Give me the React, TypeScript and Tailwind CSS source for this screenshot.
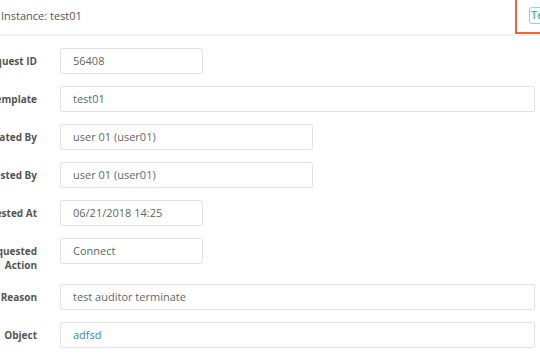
import React from 'react';

const rows = [
  { label: 'Request ID', value: '56408', w: 'w-[143px]' },
  { label: 'Template', value: 'test01', w: 'w-[475px]' },
  { label: 'Created By', value: 'user 01 (user01)', w: 'w-[253px]' },
  { label: 'Requested By', value: 'user 01 (user01)', w: 'w-[253px]' },
  { label: 'Requested At', value: '06/21/2018 14:25', w: 'w-[143px]' },
  { label: 'Requested Action', value: 'Connect', w: 'w-[143px]' },
  { label: 'Reason', value: 'test auditor terminate', w: 'w-[475px]' },
  { label: 'Object', value: 'adfsd', w: 'w-[475px]', link: true },
];

export default function App() {
  return (
    <div className="w-[540px] h-[360px] overflow-hidden bg-white font-['Open_Sans',sans-serif]">
      {/* Header */}
      <div className="flex items-start h-[36px] border-b-2 border-[#f1f1f1]">
        <div className="flex-1 pt-[8px] pl-[1px] text-[11px] text-[#555] whitespace-nowrap">
          Instance: test01
        </div>
        <div className="w-[25px] h-[34px] shrink-0 border-l-2 border-b-2 border-[#f26436] pl-[12px] pt-[7px] overflow-hidden">
          <div className="h-[17px] w-[64px] border-[1.5px] border-[#8fd9c0] rounded-[3px] pl-[1px] text-[11px] leading-[14px] font-semibold text-[#48b48f]">
            Terminate
          </div>
        </div>
      </div>

      {/* Form */}
      <div className="flex flex-col gap-[12px] pt-[12px]">
        {rows.map((r) => (
          <div key={r.label} className="flex items-start gap-[23px]">
            <div className="w-[37px] shrink-0 flex justify-end">
              <span className="w-[85px] shrink-0 text-right pt-[6px] text-[10px] leading-[14px] font-bold text-[#555]">
                {r.label}
              </span>
            </div>
            <div
              className={`${r.w} h-[26px] shrink-0 border border-[#e3e3e3] rounded-[2px] pl-[12px] flex items-center text-[11px] ${
                r.link ? 'text-[#3d7fc4]' : 'text-[#666]'
              }`}
            >
              {r.value}
            </div>
          </div>
        ))}
      </div>
    </div>
  );
}
